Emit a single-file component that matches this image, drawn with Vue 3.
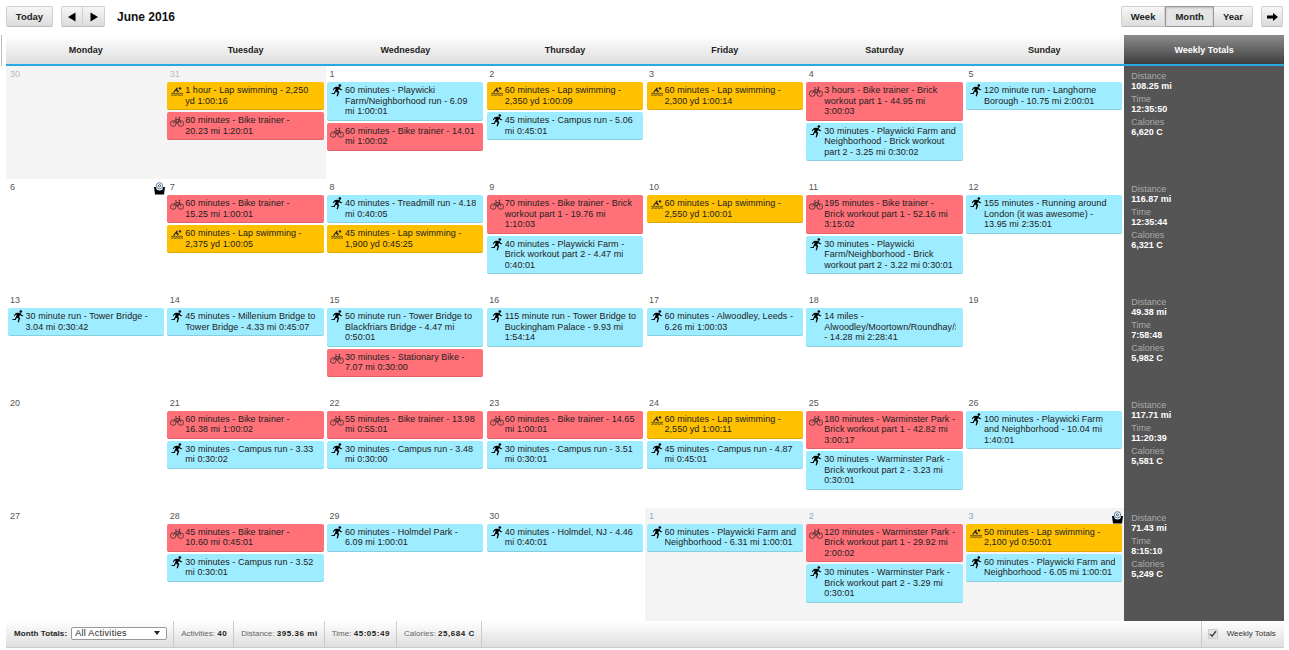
<script setup>
const headers = ['Monday', 'Tuesday', 'Wednesday', 'Thursday', 'Friday', 'Saturday', 'Sunday']
const d = (date, events = [], opts = {}) => ({ date, events, ...opts })
const s = (text) => ({ type: 'swim', text })
const b = (text) => ({ type: 'bike', text })
const r = (text) => ({ type: 'run', text })
const weeks = [
  {
    days: [
      d(30, [], { other: true }),
      d(31, [s('1 hour - Lap swimming - 2,250\nyd 1:00:16'), b('80 minutes - Bike trainer -\n20.23 mi 1:20:01')], { other: true }),
      d(1, [r('60 minutes - Playwicki\nFarm/Neighborhood run - 6.09\nmi 1:00:01'), b('60 minutes - Bike trainer - 14.01\nmi 1:00:02')]),
      d(2, [s('60 minutes - Lap swimming -\n2,350 yd 1:00:09'), r('45 minutes - Campus run - 5.06\nmi 0:45:01')]),
      d(3, [s('60 minutes - Lap swimming -\n2,300 yd 1:00:14')]),
      d(4, [b('3 hours - Bike trainer - Brick\nworkout part 1 - 44.95 mi\n3:00:03'), r('30 minutes - Playwicki Farm and\nNeighborhood - Brick workout\npart 2 - 3.25 mi 0:30:02')]),
      d(5, [r('120 minute run - Langhorne\nBorough - 10.75 mi 2:00:01')]),
    ],
    totals: ['108.25 mi', '12:35:50', '6,620 C'],
  },
  {
    days: [
      d(6, [], { medal: true }),
      d(7, [b('60 minutes - Bike trainer -\n15.25 mi 1:00:01'), s('60 minutes - Lap swimming -\n2,375 yd 1:00:05')]),
      d(8, [r('40 minutes - Treadmill run - 4.18\nmi 0:40:05'), s('45 minutes - Lap swimming -\n1,900 yd 0:45:25')]),
      d(9, [b('70 minutes - Bike trainer - Brick\nworkout part 1 - 19.76 mi\n1:10:03'), r('40 minutes - Playwicki Farm -\nBrick workout part 2 - 4.47 mi\n0:40:01')]),
      d(10, [s('60 minutes - Lap swimming -\n2,550 yd 1:00:01')]),
      d(11, [b('195 minutes - Bike trainer -\nBrick workout part 1 - 52.16 mi\n3:15:02'), r('30 minutes - Playwicki\nFarm/Neighborhood - Brick\nworkout part 2 - 3.22 mi 0:30:01')]),
      d(12, [r('155 minutes - Running around\nLondon (it was awesome) -\n13.95 mi 2:35:01')]),
    ],
    totals: ['116.87 mi', '12:35:44', '6,321 C'],
  },
  {
    days: [
      d(13, [r('30 minute run - Tower Bridge -\n3.04 mi 0:30:42')]),
      d(14, [r('45 minutes - Millenium Bridge to\nTower Bridge - 4.33 mi 0:45:07')]),
      d(15, [r('50 minute run - Tower Bridge to\nBlackfriars Bridge - 4.47 mi\n0:50:01'), b('30 minutes - Stationary Bike -\n7.07 mi 0:30:00')]),
      d(16, [r('115 minute run - Tower Bridge to\nBuckingham Palace - 9.93 mi\n1:54:14')]),
      d(17, [r('60 minutes - Alwoodley, Leeds -\n6.26 mi 1:00:03')]),
      d(18, [r('14 miles -\nAlwoodley/Moortown/Roundhay/Shadwell\n- 14.28 mi 2:28:41')]),
      d(19),
    ],
    totals: ['49.38 mi', '7:58:48', '5,982 C'],
  },
  {
    days: [
      d(20),
      d(21, [b('60 minutes - Bike trainer -\n16.38 mi 1:00:02'), r('30 minutes - Campus run - 3.33\nmi 0:30:02')]),
      d(22, [b('55 minutes - Bike trainer - 13.98\nmi 0:55:01'), r('30 minutes - Campus run - 3.48\nmi 0:30:00')]),
      d(23, [b('60 minutes - Bike trainer - 14.65\nmi 1:00:01'), r('30 minutes - Campus run - 3.51\nmi 0:30:01')]),
      d(24, [s('60 minutes - Lap swimming -\n2,550 yd 1:00:11'), r('45 minutes - Campus run - 4.87\nmi 0:45:01')]),
      d(25, [b('180 minutes - Warminster Park -\nBrick workout part 1 - 42.82 mi\n3:00:17'), r('30 minutes - Warminster Park -\nBrick workout part 2 - 3.23 mi\n0:30:01')]),
      d(26, [r('100 minutes - Playwicki Farm\nand Neighborhood - 10.04 mi\n1:40:01')]),
    ],
    totals: ['117.71 mi', '11:20:39', '5,581 C'],
  },
  {
    days: [
      d(27),
      d(28, [b('45 minutes - Bike trainer -\n10.60 mi 0:45:01'), r('30 minutes - Campus run - 3.52\nmi 0:30:01')]),
      d(29, [r('60 minutes - Holmdel Park -\n6.09 mi 1:00:01')]),
      d(30, [r('40 minutes - Holmdel, NJ - 4.46\nmi 0:40:01')]),
      d(1, [r('60 minutes - Playwicki Farm and\nNeighborhood - 6.31 mi 1:00:01')], { other: true, blue: true }),
      d(2, [b('120 minutes - Warminster Park -\nBrick workout part 1 - 29.92 mi\n2:00:02'), r('30 minutes - Warminster Park -\nBrick workout part 2 - 3.29 mi\n0:30:01')], { other: true, blue: true }),
      d(3, [s('50 minutes - Lap swimming -\n2,100 yd 0:50:01'), r('60 minutes - Playwicki Farm and\nNeighborhood - 6.05 mi 1:00:01')], { other: true, blue: true, medal: true }),
    ],
    totals: ['71.43 mi', '8:15:10', '5,249 C'],
  },
]
const labels = ['Distance', 'Time', 'Calories']
const stats = [['Activities:', '40'], ['Distance:', '395.36 mi'], ['Time:', '45:05:49'], ['Calories:', '25,684 C']]
</script>

<template>
  <div class="page">
    <header class="toolbar">
      <button class="btn today">Today</button>
      <div class="group nav">
        <button class="btn"><svg width="10" height="10" viewBox="0 0 10 10"><path d="M8.5 0.5V9.5L1 5Z" /></svg></button>
        <button class="btn"><svg width="10" height="10" viewBox="0 0 10 10"><path d="M1.5 0.5V9.5L9 5Z" /></svg></button>
      </div>
      <div class="title">June 2016</div>
      <div class="spacer"></div>
      <div class="group views">
        <button class="btn">Week</button>
        <button class="btn active">Month</button>
        <button class="btn">Year</button>
      </div>
      <button class="btn share"><svg width="11" height="8" viewBox="0 0 11 8"><path d="M0 2.5H6V0L11 4L6 8V5.5H0Z" /></svg></button>
    </header>

    <div class="calendar">
      <div class="head">
        <div v-for="h in headers" :key="h" class="head-cell">{{ h }}</div>
        <div class="head-cell head-totals">Weekly Totals</div>
      </div>
      <div v-for="(week, wi) in weeks" :key="wi" class="week">
        <div v-for="(day, di) in week.days" :key="di" class="day" :class="{ other: day.other, blue: day.blue }">
          <div class="date">{{ day.date }}</div>
          <svg v-if="day.medal" class="medal" width="13" height="13" viewBox="0 0 13 13">
            <path d="M1 5H3A3.5 3.5 0 0 0 10 5H12L11 12.5H2Z" fill="#000" />
            <circle cx="6.5" cy="3.8" r="3.1" fill="#fff" stroke="#4a7fb0" stroke-width="1" />
            <circle cx="6.5" cy="3.8" r="1.1" fill="none" stroke="#333" stroke-width="0.8" />
          </svg>
          <div v-for="(ev, ei) in day.events" :key="ei" class="event" :class="ev.type">
            <svg v-if="ev.type === 'run'" class="icon" width="13" height="13" viewBox="0 0 14 14">
              <circle cx="10.6" cy="1.6" r="1.4" fill="#000" />
              <path d="M6.6 3L10.2 3.2L11.6 5.4L13.2 5.8L13 6.8L10.8 6.4L9.9 5.2L8.8 7.2L10 8.8L8.2 13.4L7.1 13L8.2 9.4L6.4 8.2L5 10.8L1.4 10.9L1.5 9.9L4.2 9.6L6.3 5L5 5.1L3.9 6.8L3.1 6.2L4.6 3.9Z" fill="#000" />
            </svg>
            <svg v-else-if="ev.type === 'bike'" class="icon" width="14" height="14" viewBox="0 0 14 14" fill="none" stroke="#222" stroke-width="0.7">
              <circle cx="3.2" cy="9.6" r="2.8" />
              <circle cx="10.8" cy="9.6" r="2.8" />
              <path d="M3.2 9.6L5.8 5.4H9.3L10.8 9.6M5.8 5.4L7 9.6L9.3 5.4M8.6 3.2H10L9.3 5.4M5 3.8H6.8" />
            </svg>
            <svg v-else class="icon" width="14" height="14" viewBox="0 0 14 14">
              <circle cx="10" cy="4.4" r="1.2" fill="#222" />
              <path d="M3 8.4L6.6 3.8L8 3.4L7.2 5.2L9.2 8L7.8 8.2L5.9 6.6L4.4 8.4Z" fill="#222" />
              <path d="M1.2 9.7L3.4 9.1L5.4 9.7L7.4 9.1L9.4 9.7L11.4 9.1L13 9.7M1.2 11.4L3.4 10.8L5.4 11.4L7.4 10.8L9.4 11.4L11.4 10.8L13 11.4" fill="none" stroke="#222" stroke-width="0.7" />
            </svg>
            <div class="text">{{ ev.text }}</div>
          </div>
        </div>
        <div class="totals">
          <template v-for="(label, li) in labels" :key="label">
            <div class="t-label">{{ label }}</div>
            <div class="t-value">{{ week.totals[li] }}</div>
          </template>
        </div>
      </div>
    </div>

    <footer class="footer">
      <div class="seg month">
        <b>Month Totals:</b>
        <div class="select">All Activities<span class="caret"></span></div>
      </div>
      <div v-for="st in stats" :key="st[0]" class="seg stat">{{ st[0] }} <b>{{ st[1] }}</b></div>
      <div class="spacer"></div>
      <div class="seg weekly">
        <span class="check"><svg width="8" height="8" viewBox="0 0 9 9"><path d="M1.2 4.6L3.5 7L7.8 1.5" fill="none" stroke="#444" stroke-width="1.7" /></svg></span>
        Weekly Totals
      </div>
    </footer>
  </div>
</template>

<style>
html, body { margin: 0; background: #fff; }
</style>

<style scoped>
.page {
  width: 1289px;
  height: 650px;
  overflow: hidden;
  box-sizing: border-box;
  padding: 0 5px 0 6px;
  font-family: "Liberation Sans", Arial, sans-serif;
  font-size: 9px;
  color: #222;
}
.toolbar {
  height: 35px;
  display: flex;
  align-items: flex-start;
  padding-top: 6px;
  box-sizing: border-box;
}
.spacer { flex: 1; }
.btn {
  font: bold 9.5px "Liberation Sans", Arial, sans-serif;
  color: #222;
  height: 21px;
  padding: 0;
  border: 1px solid #d0d0d0;
  border-bottom-color: #bbb;
  border-radius: 2px;
  background: linear-gradient(#f6f6f6, #dcdcdc);
  display: flex;
  align-items: center;
  justify-content: center;
}
.btn svg path { fill: #000; }
.today { width: 47px; }
.group { display: flex; }
.group .btn { border-radius: 0; border-left-width: 0; }
.group .btn:first-child { border-left-width: 1px; border-radius: 2px 0 0 2px; }
.group .btn:last-child { border-radius: 0 2px 2px 0; }
.nav { margin-left: 8px; }
.nav .btn { width: 22px; }
.title { margin: 4px 0 0 12px; font-size: 12px; font-weight: bold; color: #111; }
.views .btn { padding: 0 9px; }
.views .btn.active {
  background: #e4e4e4;
  border: 1px solid #999;
  box-shadow: inset 0 1px 2px #bbb;
}
.share { width: 22px; margin: 0 1px 0 8px; }
.calendar { width: 1278px; }
.head {
  position: relative;
  display: grid;
  grid-template-columns: repeat(8, 1fr);
  height: 29px;
  border-bottom: 2px solid #29a9e4;
}
.head::before {
  content: "";
  position: absolute;
  left: -5px;
  top: 0;
  bottom: -2px;
  width: 1px;
  background: #bbb;
}
.head-cell {
  display: flex;
  align-items: center;
  justify-content: center;
  font-weight: bold;
  color: #222;
  background: linear-gradient(#fff, #dedede);
}
.head-totals { color: #fff; background: linear-gradient(#8c8c8c, #3e3e3e); }
.week { display: grid; grid-template-columns: repeat(8, 1fr); }
.day {
  position: relative;
  min-width: 0;
  padding: 0 2px 16px 1.5px;
}
.day.other { background: #f4f4f4; }
.date {
  height: 16px;
  padding: 3px 0 0 2.5px;
  box-sizing: border-box;
  line-height: 10px;
  color: #555;
}
.other .date { color: #bbb; }
.other.blue .date { color: #8fa8c0; }
.medal { position: absolute; right: 0; top: 3px; }
.event {
  position: relative;
  margin-bottom: 2px;
  padding: 3px 7px 4px 18px;
  line-height: 10.5px;
  letter-spacing: 0.05px;
  border-radius: 2px;
  box-shadow: inset 0 -1px 0 rgba(0, 0, 0, 0.12);
  color: #222;
}
.event .text { overflow: hidden; white-space: pre; }
.event .icon { position: absolute; left: 3px; top: 2px; }
.swim { background: #ffc000; }
.bike { background: #ff7078; }
.run { background: #9eecff; }
.totals { background: #555; padding: 2px 0 0 7px; }
.t-label { color: #aaa; line-height: 10px; margin-top: 3px; }
.t-value { color: #fff; font-weight: bold; line-height: 10px; }
.footer {
  width: 1278px;
  height: 27px;
  display: flex;
  box-sizing: border-box;
  background: linear-gradient(#fff, #dedede);
  border-bottom: 1px solid #ccc;
  font-size: 8px;
}
.seg {
  display: flex;
  align-items: center;
  padding: 0 6px;
  border-right: 1px solid #ccc;
  color: #666;
  white-space: pre;
}
.stat { padding-left: 7px; }
.seg b { color: #222; letter-spacing: 0.55px; }
.month b { letter-spacing: 0.1px; }
.month { color: #222; padding: 0 6px 0 8px; }
.select {
  position: relative;
  width: 96px;
  height: 13px;
  margin-left: 4px;
  box-sizing: border-box;
  border: 1px solid #999;
  border-radius: 2px;
  background: #fff;
  padding-left: 3px;
  font-size: 9px;
  line-height: 11px;
  color: #222;
  letter-spacing: 0.3px;
}
.caret {
  position: absolute;
  right: 6px;
  top: 3px;
  border: 3px solid transparent;
  border-top: 4px solid #222;
  border-bottom: 0;
}
.weekly { border-right: 0; border-left: 1px solid #ccc; color: #333; }
.check {
  width: 8px;
  height: 8px;
  margin-right: 6px;
  border: 1px solid #ccc;
  background: #e4e4e4;
  display: flex;
}
</style>
